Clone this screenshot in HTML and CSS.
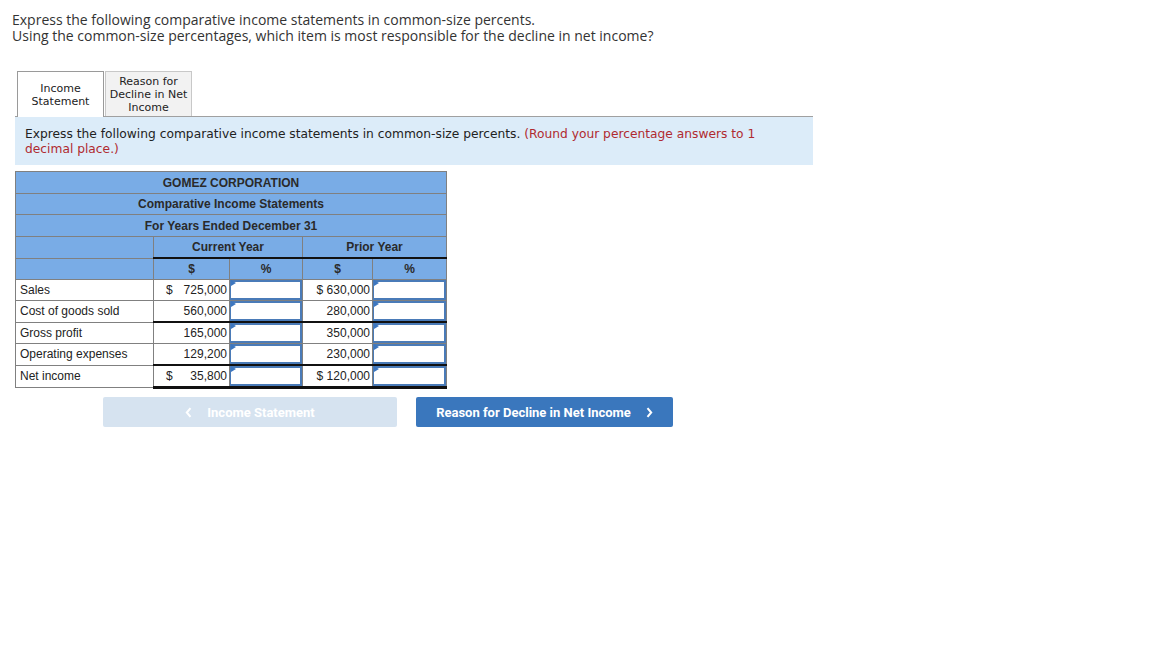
FILE: index.html
```html
<!DOCTYPE html>
<html>
<head>
<meta charset="utf-8">
<link rel="stylesheet" href="styles.css">
</head>
<body>
<div class="page">
  <div class="question">
    <p>Express the following comparative income statements in common-size percents.</p>
    <p>Using the common-size percentages, which item is most responsible for the decline in net income?</p>
  </div>

  <div class="tabs">
    <div class="tab active">Income<br>Statement</div>
    <div class="tab">Reason for<br>Decline in Net<br>Income</div>
  </div>
  <div class="panel">
    Express the following comparative income statements in common-size percents. <span class="hint">(Round your percentage answers to 1 decimal place.)</span>
  </div>

  <table class="stmt">
    <colgroup>
      <col class="c-label"><col class="c-d1"><col class="c-p1"><col class="c-d2"><col class="c-p2">
    </colgroup>
    <tr class="hd tall"><td colspan="5">GOMEZ CORPORATION</td></tr>
    <tr class="hd"><td colspan="5">Comparative Income Statements</td></tr>
    <tr class="hd tall"><td colspan="5">For Years Ended December 31</td></tr>
    <tr class="hd years"><td></td><td colspan="2" class="ul">Current Year</td><td colspan="2" class="ul">Prior Year</td></tr>
    <tr class="hd"><td></td><td>$</td><td>%</td><td>$</td><td>%</td></tr>
    <tr class="row">
      <td class="lbl">Sales</td>
      <td class="amt"><span class="cur">$</span><span>725,000</span></td>
      <td class="inp"><div class="box"></div></td>
      <td class="amt tight"><span>$ 630,000</span></td>
      <td class="inp"><div class="box"></div></td>
    </tr>
    <tr class="row sub">
      <td class="lbl">Cost of goods sold</td>
      <td class="amt"><span></span><span>560,000</span></td>
      <td class="inp"><div class="box"></div></td>
      <td class="amt tight"><span>280,000</span></td>
      <td class="inp"><div class="box"></div></td>
    </tr>
    <tr class="row">
      <td class="lbl">Gross profit</td>
      <td class="amt"><span></span><span>165,000</span></td>
      <td class="inp"><div class="box"></div></td>
      <td class="amt tight"><span>350,000</span></td>
      <td class="inp"><div class="box"></div></td>
    </tr>
    <tr class="row sub">
      <td class="lbl">Operating expenses</td>
      <td class="amt"><span></span><span>129,200</span></td>
      <td class="inp"><div class="box"></div></td>
      <td class="amt tight"><span>230,000</span></td>
      <td class="inp"><div class="box"></div></td>
    </tr>
    <tr class="row total">
      <td class="lbl">Net income</td>
      <td class="amt"><span class="cur">$</span><span>35,800</span></td>
      <td class="inp"><div class="box"></div></td>
      <td class="amt tight"><span>$ 120,000</span></td>
      <td class="inp"><div class="box"></div></td>
    </tr>
  </table>

  <div class="nav">
    <button class="btn prev"><svg class="chev" width="7" height="11" viewBox="0 0 7 11"><path d="M5.5 1.2 L1.8 5.5 L5.5 9.8" fill="none" stroke="#fff" stroke-width="2"/></svg>Income Statement</button>
    <button class="btn next">Reason for Decline in Net Income<svg class="chev" width="7" height="11" viewBox="0 0 7 11"><path d="M1.5 1.2 L5.2 5.5 L1.5 9.8" fill="none" stroke="#fff" stroke-width="2"/></svg></button>
  </div>
</div>
</body>
</html>
```

FILE: styles.css
```css
html, body {
  margin: 0;
  padding: 0;
  background: #fff;
}

.page {
  padding: 12px 12px 0 12px;
}

.question p {
  margin: 0;
  font-family: "Open Sans", "Liberation Sans", sans-serif;
  font-size: 14px;
  line-height: 16px;
  color: #333;
}

.tabs {
  display: flex;
  align-items: flex-start;
  gap: 1px;
  margin: 27px 0 0 5px;
  height: 45px;
}

.tab {
  box-sizing: border-box;
  width: 87px;
  height: 45px;
  display: flex;
  align-items: center;
  justify-content: center;
  text-align: center;
  font-family: "DejaVu Sans", Verdana, sans-serif;
  font-size: 11px;
  line-height: 13px;
  color: #222;
  background: #f2f2f2;
  border: 1px solid #c8c8c8;
  border-bottom: none;
}

.tab.active {
  height: 46px;
  background: #fff;
  border-color: #9a9a9a;
  position: relative;
  z-index: 1;
}

.panel {
  box-sizing: border-box;
  margin-left: 3px;
  width: 798px;
  height: 49px;
  background: #dcecf9;
  border-top: 1px solid #a0a0a0;
  padding: 10px 40px 0 10px;
  font-family: "DejaVu Sans", Verdana, sans-serif;
  font-size: 12.25px;
  line-height: 15px;
  color: #222;
}

.hint {
  color: #b02a30;
}

.stmt {
  margin: 6px 0 0 3px;
  border-collapse: collapse;
  width: 431px;
  table-layout: fixed;
  font-family: "Liberation Sans", Arial, sans-serif;
  font-size: 12px;
  color: #222;
}

.c-label { width: 138px; }
.c-d1 { width: 76px; }
.c-p1 { width: 73px; }
.c-d2 { width: 70px; }
.c-p2 { width: 74px; }

.stmt td {
  border: 1px solid #808080;
  height: 20px;
  padding: 0;
}

.stmt tr.tall td {
  height: 21px;
}

.hd td {
  background: #79ace6;
  font-weight: bold;
  text-align: center;
  color: #2a2a2a;
}

.hd.years td.ul {
  border-bottom: 2px solid #111;
}

.row td.lbl {
  padding-left: 4px;
  text-align: left;
}

.row td.amt {
  padding: 0 2px 0 12px;
  white-space: nowrap;
}

.row td.amt span:first-child {
  float: left;
}

.row td.amt span:last-child {
  float: right;
}

.row td.amt.tight {
  padding-left: 2px;
  text-align: right;
}

.row td.amt.tight span {
  float: none;
}

.row.sub td.amt,
.row.sub td.inp {
  border-bottom: 2px solid #111;
}

.row.total td.amt,
.row.total td.inp {
  border-bottom: 3px solid #111;
}

.row td.inp {
  position: relative;
  padding: 0;
}

.box {
  box-sizing: border-box;
  height: 20px;
  border: 2px solid #4a7bb8;
  border-left-width: 1px;
  background: #fff;
}

.row td.inp::before {
  content: "";
  position: absolute;
  left: 1px;
  top: 0;
  width: 0;
  height: 0;
  border-top: 3px solid transparent;
  border-bottom: 3px solid transparent;
  border-left: 5px solid #3d77c0;
}

.nav {
  display: flex;
  gap: 19px;
  margin: 8px 0 0 91px;
}

.btn {
  height: 30px;
  border: none;
  border-radius: 2px;
  font-family: "Liberation Sans Narrow", "Roboto", "Liberation Sans", sans-serif;
  font-weight: bold;
  font-size: 13px;
  color: #fff;
  display: flex;
  align-items: center;
  justify-content: center;
  padding: 0;
}

.btn.prev {
  width: 294px;
  background: #d6e3f0;
}

.btn.next {
  width: 257px;
  background: #3a77bd;
}

.prev .chev {
  margin-right: 15px;
}

.next .chev {
  margin-left: 15px;
}
```
